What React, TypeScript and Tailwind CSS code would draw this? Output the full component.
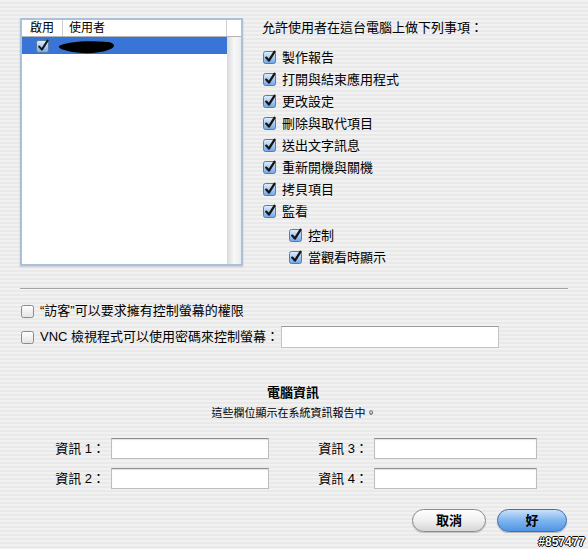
import React from "react";

function Check({ checked, small }: { checked: boolean; small?: boolean }) {
  return (
    <svg width="14" height="14" viewBox="0 0 14 14" className="shrink-0">
      <rect
        x="0.5"
        y="1.5"
        width="12"
        height="12"
        rx="2"
        fill={checked ? "url(#cbOn)" : "url(#cbOff)"}
        stroke={checked ? "#5a7ba6" : "#8a8a8a"}
      />
      {checked && (
        <path
          d="M3.2 7.6 L5.9 10.6 L11.6 1.6"
          fill="none"
          stroke="#151515"
          strokeWidth={small ? 2 : 2.3}
          strokeLinecap="round"
          strokeLinejoin="round"
        />
      )}
    </svg>
  );
}

function Item({ label, sub }: { label: string; sub?: boolean }) {
  return (
    <div className={sub ? "flex items-center h-[22px] pl-[27px] gap-[5px]" : "flex items-center h-[22px] pl-[1px] gap-[5px]"}>
      <Check checked />
      <span className="text-[13px] leading-none text-black">{label}</span>
    </div>
  );
}

function Field({ label, w }: { label: string; w: string }) {
  return (
    <div className="flex items-center h-[21px]">
      <span className="w-[86px] text-right text-[13px] pr-[6px] text-black">{label}</span>
      <div className={`${w} h-[21px] bg-white border border-[#bdbdbd] border-t-[#8e8e8e] shadow-[inset_0_1px_1px_rgba(0,0,0,0.12)]`} />
    </div>
  );
}

export default function App() {
  const items = [
    "製作報告",
    "打開與結束應用程式",
    "更改設定",
    "刪除與取代項目",
    "送出文字訊息",
    "重新開機與關機",
    "拷貝項目",
    "監看",
  ];
  return (
    <div className="relative w-[588px] h-[549px] overflow-hidden bg-[repeating-linear-gradient(180deg,#f1f1f1_0px,#f1f1f1_2px,#e9e9e9_2px,#e9e9e9_4px)] font-['Lucida_Grande','Liberation_Sans','Noto_Sans_CJK_TC',sans-serif] text-black">
      <svg width="0" height="0" className="absolute">
        <defs>
          <linearGradient id="cbOn" x1="0" y1="0" x2="0" y2="1">
            <stop offset="0" stopColor="#e3eefc" />
            <stop offset="0.5" stopColor="#a9cbf2" />
            <stop offset="1" stopColor="#6fa6ea" />
          </linearGradient>
          <linearGradient id="cbOff" x1="0" y1="0" x2="0" y2="1">
            <stop offset="0" stopColor="#ffffff" />
            <stop offset="1" stopColor="#e2e2e2" />
          </linearGradient>
        </defs>
      </svg>

      {/* top section */}
      <div className="flex pt-[18px] pl-[20px] gap-[19px]">
        <div className="w-[223px] h-[248px] border-2 border-[#a9c1da] bg-white flex flex-col shadow-[0_1px_2px_rgba(0,0,0,0.15)]">
          <div className="flex h-[17px] border-b border-[#b5b5b5] text-[12px] leading-[16px]">
            <div className="w-[41px] border-r border-[#cfcfcf] text-center">啟用</div>
            <div className="flex-1 border-r border-[#cfcfcf] pl-[6px]">使用者</div>
            <div className="w-[14px]" />
          </div>
          <div className="flex flex-1">
            <div className="flex-1">
              <div className="h-[17px] bg-[#3875d7] flex items-center pl-[14px]">
                <Check checked small />
                <svg width="60" height="16" viewBox="0 0 60 16" className="ml-[8px] mt-[3px]">
                  <path
                    d="M1 7 C 8 3, 28 1, 50 3 C 58 4, 58 9, 50 11 C 40 15, 22 15, 10 12 C 5 11, 0 9, 1 7 Z"
                    fill="#000"
                  />
                </svg>
              </div>
            </div>
            <div className="w-[14px] bg-gradient-to-r from-[#d9d9d9] via-[#f8f8f8] to-[#ececec]" />
          </div>
        </div>

        <div className="flex flex-col">
          <div className="h-[20px] flex items-center text-[13px]">允許使用者在這台電腦上做下列事項：</div>
          <div className="mt-[8px] flex flex-col">
            {items.map((t) => (
              <Item key={t} label={t} />
            ))}
            <div className="mt-[2px]">
              <Item label="控制" sub />
              <Item label="當觀看時顯示" sub />
            </div>
          </div>
        </div>
      </div>

      {/* separator */}
      <div className="mt-[20px] mx-[20px] border-t border-[#a3a3a3] border-b border-b-[#f8f8f8]" />

      <div className="mt-[10px] pl-[21px] flex flex-col gap-[4px]">
        <div className="flex items-center h-[22px] gap-[5px]">
          <Check checked={false} />
          <span className="text-[13px]">“訪客”可以要求擁有控制螢幕的權限</span>
        </div>
        <div className="flex items-center h-[22px]">
          <div className="w-[260px] flex items-center gap-[5px]">
            <Check checked={false} />
            <span className="text-[13px]">VNC 檢視程式可以使用密碼來控制螢幕：</span>
          </div>
          <div className="w-[218px] h-[22px] bg-white border border-[#c4c4c4] border-t-[#9a9a9a]" />
        </div>
      </div>

      {/* computer info */}
      <div className="mt-[37px] flex flex-col items-center">
        <div className="h-[16px] flex items-center text-[13px] font-bold pr-[2px]">電腦資訊</div>
        <div className="mt-[5px] h-[14px] flex items-center text-[11px]">這些欄位顯示在系統資訊報告中。</div>
      </div>

      <div className="mt-[18px] pl-[25px] flex gap-[19px]">
        <div className="flex flex-col gap-[9px]">
          <Field label="資訊 1：" w="w-[158px]" />
          <Field label="資訊 2：" w="w-[158px]" />
        </div>
        <div className="flex flex-col gap-[9px]">
          <Field label="資訊 3：" w="w-[163px]" />
          <Field label="資訊 4：" w="w-[163px]" />
        </div>
      </div>

      <div className="mt-[20px] flex justify-end pr-[21px] gap-[11px]">
        <button className="w-[74px] h-[23px] rounded-full border border-[#8a8a8a] bg-gradient-to-b from-[#ffffff] via-[#f0f0f0] to-[#d6d6d6] text-[13px] font-bold shadow-[0_1px_1px_rgba(0,0,0,0.2)]">
          取消
        </button>
        <button className="w-[70px] h-[23px] rounded-full border border-[#3f6fae] bg-gradient-to-b from-[#c9e1fa] via-[#7fb4ee] to-[#4f95e6] text-[13px] font-bold shadow-[0_1px_1px_rgba(0,0,0,0.25)]">
          好
        </button>
      </div>

      <div className="absolute right-[3px] bottom-[1px] text-[12px] font-bold text-white leading-none [text-shadow:1px_0_0_#000,-1px_0_0_#000,0_1px_0_#000,0_-1px_0_#000]">
        #857477
      </div>
    </div>
  );
}
